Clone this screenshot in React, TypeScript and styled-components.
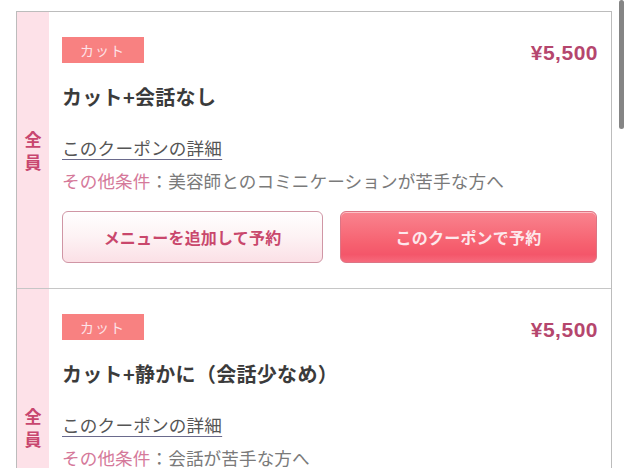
import React from 'react';
import styled, { createGlobalStyle } from 'styled-components';

const GlobalStyle = createGlobalStyle`
  html, body {
    margin: 0;
    padding: 0;
    background: #fff;
    overflow: hidden;
  }
  body {
    font-family: "Noto Sans CJK JP", "Noto Sans", sans-serif;
    color: #3a3a3a;
  }
`;

type Coupon = {
  tag: string;
  price: string;
  title: string;
  condition: string;
};

const coupons: Coupon[] = [
  {
    tag: 'カット',
    price: '¥5,500',
    title: 'カット+会話なし',
    condition: '美容師とのコミニケーションが苦手な方へ',
  },
  {
    tag: 'カット',
    price: '¥5,500',
    title: 'カット+静かに（会話少なめ）',
    condition: '会話が苦手な方へ',
  },
];

const App: React.FC = () => {
  return (
    <>
      <GlobalStyle />
      <Page>
        <CouponList>
          {coupons.map((c, i) => (
            <CouponCard key={i} $first={i === 0}>
              <Target>
                <span>全</span>
                <span>員</span>
              </Target>
              <Body>
                <HeadRow>
                  <Tag>{c.tag}</Tag>
                  <Price>{c.price}</Price>
                </HeadRow>
                <Title>{c.title}</Title>
                <DetailLink href="#">このクーポンの詳細</DetailLink>
                <Condition>
                  <em>その他条件</em>：{c.condition}
                </Condition>
                <Buttons>
                  <Button $primary={false}>メニューを追加して予約</Button>
                  <Button $primary>このクーポンで予約</Button>
                </Buttons>
              </Body>
            </CouponCard>
          ))}
        </CouponList>
      </Page>
      <ScrollThumb />
    </>
  );
};

const Page = styled.main`
  padding: 11px 0 0 16px;
  width: 596px;
`;

const CouponList = styled.section`
  border: 1px solid #bcbcbc;
  border-bottom: none;
`;

const CouponCard = styled.article<{ $first: boolean }>`
  display: grid;
  grid-template-columns: 32px 1fr;
  border-top: ${(p) => (p.$first ? 'none' : '1px solid #c6c6c6')};
`;

const Target = styled.div`
  background: #fde1e8;
  color: #c8466f;
  font-weight: 700;
  font-size: 17px;
  line-height: 23px;
  display: flex;
  flex-direction: column;
  align-items: center;
  justify-content: center;
`;

const Body = styled.div`
  padding: 25px 14px 25px 13px;
  display: flex;
  flex-direction: column;
`;

const HeadRow = styled.div`
  display: flex;
  justify-content: space-between;
  align-items: flex-start;
`;

const Tag = styled.span`
  background: #f88181;
  color: #fde3e8;
  font-size: 14px;
  letter-spacing: 1px;
  height: 26px;
  line-height: 26px;
  padding: 0 19px 0 18px;
`;

const Price = styled.span`
  font-family: "Liberation Sans", Arial, sans-serif;
  font-weight: 700;
  font-size: 21px;
  color: #b5466d;
  line-height: 26px;
  padding-top: 3px;
  letter-spacing: 0.5px;
  margin-right: -1px;
`;

const Title = styled.h2`
  margin: 16px 0 0;
  font-size: 20px;
  font-weight: 700;
  line-height: 30px;
  letter-spacing: 0.3px;
  color: #3b3b3b;
`;

const DetailLink = styled.a`
  margin-top: 21px;
  align-self: flex-start;
  font-size: 17.6px;
  line-height: 30px;
  letter-spacing: 0.2px;
  color: #555;
  text-decoration: underline;
  text-decoration-color: #6a6a8c;
  text-underline-offset: 4px;
`;

const Condition = styled.p`
  margin: 3px 0 0;
  font-size: 17.6px;
  line-height: 30px;
  letter-spacing: 0.1px;
  color: #7a7a7a;

  em {
    font-style: normal;
    color: #d5799a;
  }
`;

const Buttons = styled.div`
  margin-top: 15px;
  display: grid;
  grid-template-columns: 261px 257px;
  justify-content: space-between;
`;

const Button = styled.button<{ $primary: boolean }>`
  height: 52px;
  border-radius: 6px;
  font-family: inherit;
  font-size: 16px;
  font-weight: 700;
  letter-spacing: 0.2px;
  border: 1px solid ${(p) => (p.$primary ? '#dc7585' : '#d096a5')};
  color: ${(p) => (p.$primary ? '#fde8ec' : '#c9476c')};
  background: ${(p) =>
    p.$primary
      ? 'linear-gradient(#f9848f, #f6606f 65%, #f4566a 85%, #f66a7c)'
      : 'linear-gradient(#ffffff, #fdf2f4 50%, #fbe0e6)'};
  box-shadow: inset 0 1px 0 rgba(255, 255, 255, 0.5);
`;

const ScrollThumb = styled.div`
  position: fixed;
  top: 0;
  right: 4px;
  width: 5px;
  height: 129px;
  border-radius: 3px;
  background: #858585;
`;

export default App;
